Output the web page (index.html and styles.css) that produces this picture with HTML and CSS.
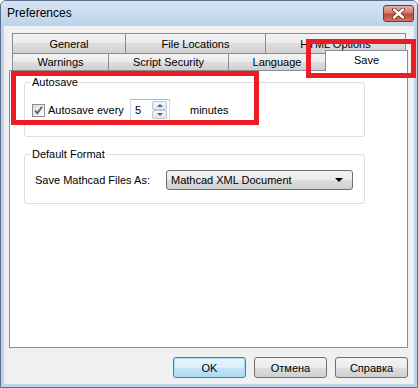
FILE: index.html
```html
<!DOCTYPE html>
<html lang="en">
<head>
    <meta charset="UTF-8">
    <title>Preferences</title>
    <link rel="stylesheet" href="styles.css">
</head>
<body>
    <div class="window">
        <div class="titlebar">
            <span class="title">Preferences</span>
            <button class="close" aria-label="Close">
                <svg width="13" height="11" viewBox="0 0 13 11">
                    <path d="M2 1.5 L11 9.5 M11 1.5 L2 9.5" stroke="#5a2a22" stroke-width="4" stroke-linecap="round"/>
                    <path d="M2 1.5 L11 9.5 M11 1.5 L2 9.5" stroke="#fff" stroke-width="2.4" stroke-linecap="round"/>
                </svg>
            </button>
        </div>

        <div class="client">
            <div class="tab-row back">
                <div class="tab w-general">General</div>
                <div class="tab w-files">File Locations</div>
                <div class="tab w-html last">HTML Options</div>
            </div>
            <div class="tab-row front">
                <div class="tab w-warn">Warnings</div>
                <div class="tab w-script">Script Security</div>
                <div class="tab w-lang">Language</div>
                <div class="tab active">Save</div>
            </div>

            <div class="panel">
                <fieldset class="group">
                    <legend>Autosave</legend>
                    <div class="row">
                        <label class="check">
                            <span class="box">
                                <svg width="11" height="11" viewBox="0 0 11 11">
                                    <path d="M2 5.5 L4.3 8.2 L9 1.8" fill="none" stroke="#4d6185" stroke-width="1.8"/>
                                </svg>
                            </span>
                            Autosave every
                        </label>
                        <div class="spin">
                            <span class="val">5</span>
                            <span class="arrows">
                                <span class="arrow up"></span>
                                <span class="arrow down"></span>
                            </span>
                        </div>
                        <span class="unit">minutes</span>
                    </div>
                </fieldset>

                <fieldset class="group format">
                    <legend>Default Format</legend>
                    <div class="row">
                        <span class="field-label">Save Mathcad Files As:</span>
                        <div class="select">
                            <span>Mathcad XML Document</span>
                            <span class="caret"></span>
                        </div>
                    </div>
                </fieldset>
            </div>

            <div class="buttons">
                <button class="btn default">OK</button>
                <button class="btn">Отмена</button>
                <button class="btn">Справка</button>
            </div>
        </div>

        <!-- red highlight marks drawn over the dialog -->
        <div class="mark mark-save"></div>
        <div class="mark mark-autosave"></div>
    </div>
</body>
</html>
```

FILE: styles.css
```css
body {
    margin: 0;
    font-family: "Liberation Sans", Arial, sans-serif;
    font-size: 11px;
    color: #000;
    background: #fff;
}

.window {
    position: relative;
    width: 418px;
    height: 388px;
    box-sizing: border-box;
    border: 1px solid #5b708c;
    border-radius: 6px 6px 0 0;
    padding: 0 3px 3px;
    background: #bfd4ec;
    display: flex;
    flex-direction: column;
}

.titlebar {
    height: 25px;
    margin: 0 -3px;
    padding: 0 3px 0 6px;
    display: flex;
    justify-content: space-between;
    align-items: flex-start;
    background: linear-gradient(#d6e4f4, #bdd3eb);
    border-radius: 5px 5px 0 0;
}
.title {
    font-size: 12px;
    line-height: 25px;
}
.close {
    margin-top: 4px;
    width: 31px;
    height: 17px;
    padding: 0;
    box-sizing: border-box;
    border: 1px solid #6e3a36;
    border-radius: 3px;
    background: linear-gradient(#e9b0a6, #d57a6a 45%, #c4473a 55%, #d27360);
    display: flex;
    align-items: center;
    justify-content: center;
}

.client {
    flex: 1;
    background: #f0f0f0;
    padding: 7px 6px 0 5px;
    display: flex;
    flex-direction: column;
}

/* tab strip */
.tab-row {
    display: flex;
    padding-left: 3px;
}
.tab-row.back { height: 20px; }
.tab-row.front {
    height: 17px;
    align-items: flex-end;
}
.tab {
    box-sizing: border-box;
    height: 100%;
    border: 1px solid #898c95;
    border-right: 0;
    border-bottom: 0;
    background: linear-gradient(#f3f3f3, #ebebeb 50%, #dedede 50%, #d0d0d0);
    display: flex;
    align-items: center;
    justify-content: center;
}
.tab.last { border-right: 1px solid #898c95; }
.w-general { width: 113px; }
.w-files { width: 140px; }
.w-html { width: 141px; }
.w-warn { width: 96px; }
.w-script { width: 120px; }
.w-lang { width: 97px; }
.tab.active {
    position: relative;
    z-index: 1;
    width: 83px;
    height: 21px;
    margin-bottom: -1px;
    border-right: 1px solid #898c95;
    background: #fff;
    padding-bottom: 2px;
}

.panel {
    height: 278px;
    box-sizing: border-box;
    border: 1px solid #898c95;
    background: #fff;
    padding: 5px 0 0 14px;
}

.group {
    margin: 0;
    width: 341px;
    box-sizing: border-box;
    border: 1px solid #d5dfe5;
    border-radius: 3px;
    padding: 10px 6px 15px;
}
.group legend {
    padding: 0 1px;
    line-height: 13px;
}
.group.format {
    margin-top: 11px;
    padding: 9px 6px 13px;
}
.row {
    display: flex;
    align-items: center;
}

.check {
    width: 99px;
    padding-left: 1px;
    box-sizing: border-box;
    display: flex;
    align-items: center;
    gap: 3px;
}
.box {
    width: 13px;
    height: 13px;
    box-sizing: border-box;
    border: 1px solid #8f8f8f;
    background: linear-gradient(135deg, #dcdcdc, #fbfbfb);
    display: flex;
    align-items: center;
    justify-content: center;
}

.spin {
    width: 40px;
    height: 22px;
    box-sizing: border-box;
    border: 1px solid #d5dae1;
    border-top-color: #b5b9c0;
    display: flex;
    align-items: center;
    justify-content: space-between;
    padding: 1px 2px 1px 4px;
}
.val { line-height: 18px; }
.arrows {
    width: 15px;
    height: 100%;
    display: flex;
    flex-direction: column;
}
.arrow {
    flex: 1;
    border: 1px solid #bcc7d4;
    border-radius: 2px;
    background: linear-gradient(#f5f8fb, #dfe6ee);
    display: flex;
    align-items: center;
    justify-content: center;
}
.arrow::after {
    content: "";
    border-left: 3px solid transparent;
    border-right: 3px solid transparent;
}
.arrow.up::after { border-bottom: 3px solid #4e6584; }
.arrow.down::after { border-top: 3px solid #4e6584; }
.unit { margin-left: 20px; }

.field-label {
    width: 135px;
    padding-left: 4px;
    box-sizing: border-box;
}
.select {
    width: 187px;
    height: 20px;
    box-sizing: border-box;
    border: 1px solid #707070;
    border-radius: 3px;
    background: linear-gradient(#f3f3f3, #ebebeb 50%, #dedede 50%, #d0d0d0);
    display: flex;
    align-items: center;
    justify-content: space-between;
    padding: 0 9px 0 4px;
}
.caret {
    border-left: 4px solid transparent;
    border-right: 4px solid transparent;
    border-top: 4px solid #000;
}

.buttons {
    margin-top: 9px;
    display: flex;
    justify-content: flex-end;
    gap: 8px;
}
.btn {
    width: 73px;
    height: 21px;
    box-sizing: border-box;
    border: 1px solid #707070;
    border-radius: 3px;
    background: linear-gradient(#f3f3f3, #ebebeb 50%, #dedede 50%, #d0d0d0);
    font: inherit;
    color: #000;
    padding: 0;
}
.btn.default {
    border-color: #3c7fb1;
    box-shadow: inset 0 0 0 1px #a6dcf5;
    background: linear-gradient(#eaf6fd, #dcf0fb 50%, #c4e4f6 50%, #b2d8ef);
}

.mark {
    position: absolute;
    box-sizing: border-box;
    border: 5px solid #ec1c24;
}
.mark-save {
    left: 305px;
    top: 38px;
    width: 110px;
    height: 39px;
}
.mark-autosave {
    left: 10px;
    top: 70px;
    width: 248px;
    height: 54px;
}
```
